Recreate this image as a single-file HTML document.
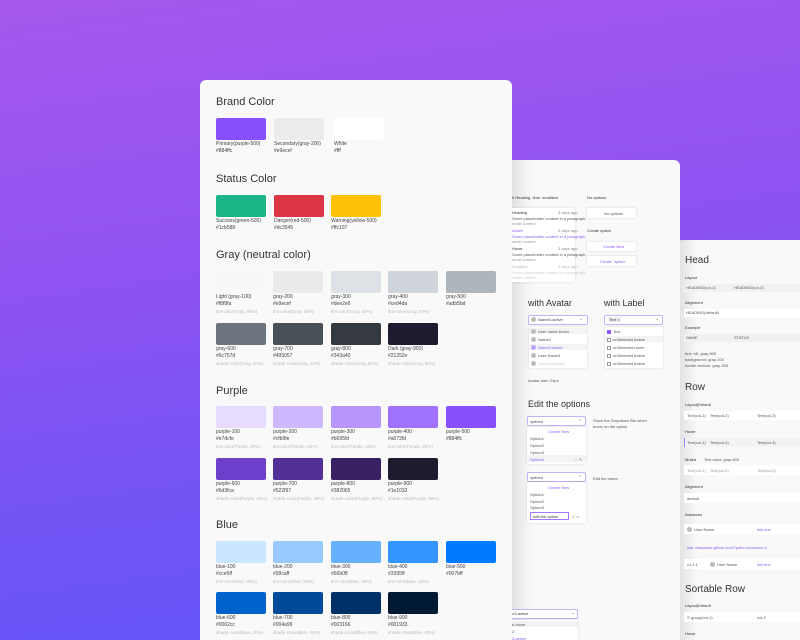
<!DOCTYPE html>
<html style="overflow:hidden;width:800px;height:640px"><head><meta charset="utf-8"><style>
*{margin:0;padding:0;box-sizing:border-box}
body{width:800px;height:640px;overflow:hidden;position:relative;font-family:"Liberation Sans",sans-serif;background:linear-gradient(172deg,#a558ec 0%,#9253f1 35%,#7354f5 70%,#5c55f8 100%)}
.a{position:absolute}
.card{position:absolute;background:#f9f9f9}
.h{position:absolute;font-size:11px;line-height:12px;color:#333;white-space:nowrap}
.h2{position:absolute;font-size:9px;line-height:10px;color:#333;white-space:nowrap}
.sw{position:absolute;width:50px}
.sw .c{height:22px;border-radius:2px}
.sw div.t{font-size:5px;line-height:7px;color:#444;white-space:nowrap;height:7px}
.sw div.m{font-size:4.5px;line-height:7px;color:#bbb;white-space:nowrap;height:7px}
.sw .c+div{margin-top:1px}
.s{position:absolute;font-size:4px;line-height:5px;color:#555;white-space:nowrap}
.p{color:#8b5cf6}
.box{position:absolute;background:#fff;box-shadow:0 0 2px rgba(0,0,0,.15);border-radius:1px}
.sel{position:absolute;background:#fff;border:1px solid #c8b0fb;border-radius:2px;height:10px}
.row{position:absolute;background:#fff;left:684px;width:116px}
.av{display:inline-block;width:5px;height:5px;border-radius:50%;background:#bbb;vertical-align:middle;margin-right:2px}
.cb{display:inline-block;width:4px;height:4px;border:0.5px solid #999;vertical-align:middle;margin-right:2px;background:#fff}
#clip{position:absolute;left:0;top:0;width:800px;height:640px;overflow:hidden}
</style></head><body><div id="clip">

<!-- card 3 -->
<div class="card" style="left:680px;top:240px;width:140px;height:400px;border-radius:6px 0 0 0"></div>
<div class="a" style="left:680px;top:240px;width:18px;height:400px;background:linear-gradient(90deg,#e3e3e3,rgba(249,249,249,0))"></div>
<!-- card 2 -->
<div class="card" style="left:440px;top:160px;width:240px;height:480px;border-radius:6px 6px 0 0"></div>
<div class="a" style="left:512px;top:160px;width:20px;height:480px;background:linear-gradient(90deg,#e2e2e2,rgba(249,249,249,0))"></div>

<!-- Card2 content -->
<div class="s" style="left:512px;top:195px;color:#333">h Heading, time, smalltext</div>
<div class="s" style="left:587px;top:195px;color:#333">No options</div>
<div class="box" style="left:505px;top:208px;width:70px;height:74px"></div>
<div class="s" style="left:512px;top:210px;color:#333">Heading</div><div class="s" style="left:558px;top:210px;color:#888">3 days ago</div>
<div class="s" style="left:512px;top:216px">Some placeholder content in a paragraph.</div><div class="s" style="left:512px;top:221px;color:#999">small content</div>
<div class="s p" style="left:512px;top:228px">Active</div><div class="s" style="left:558px;top:228px;color:#888">3 days ago</div>
<div class="s p" style="left:512px;top:234px">Some placeholder content in a paragraph.</div><div class="s" style="left:512px;top:239px;color:#999">small content</div>
<div class="s" style="left:512px;top:246px;color:#333">Hover</div><div class="s" style="left:558px;top:246px;color:#888">3 days ago</div>
<div class="s" style="left:512px;top:252px">Some placeholder content in a paragraph.</div><div class="s" style="left:512px;top:257px;color:#999">small content</div>
<div class="s" style="left:512px;top:264px;color:#bbb">Disabled</div><div class="s" style="left:558px;top:264px;color:#bbb">3 days ago</div>
<div class="s" style="left:512px;top:270px;color:#ccc">Some placeholder content in a paragraph.</div><div class="s" style="left:512px;top:275px;color:#ccc">small content</div>

<div class="box" style="left:587px;top:208px;width:49px;height:10px"></div>
<div class="s" style="left:604px;top:211px;color:#555">No options</div>
<div class="s" style="left:587px;top:228px;color:#333">Create option</div>
<div class="box" style="left:587px;top:242px;width:49px;height:9px"></div>
<div class="s p" style="left:603px;top:244px">Create New</div>
<div class="box" style="left:587px;top:256px;width:49px;height:10px"></div>
<div class="s p" style="left:600px;top:259px">Create 'option'</div>

<div class="h2" style="left:528px;top:298px">with Avatar</div>
<div class="h2" style="left:604px;top:298px">with Label</div>
<div class="sel" style="left:528px;top:315px;width:60px"></div>
<div class="s" style="left:531px;top:317px;color:#444"><span class="av"></span>Name3-active</div>
<div class="s" style="left:580px;top:317px;color:#444">^</div>
<div class="box" style="left:529px;top:327px;width:58px;height:41px"></div>
<div class="a" style="left:529px;top:328px;width:58px;height:6px;background:#f3f3f3"></div>
<div class="a" style="left:529px;top:344px;width:58px;height:6px;background:#f3f3f3"></div>
<div class="s" style="left:531px;top:329px"><span class="av"></span>User name-hover</div>
<div class="s" style="left:531px;top:337px"><span class="av"></span>Name2</div>
<div class="s p" style="left:531px;top:345px"><span class="av" style="background:#b9a3f5"></span>Name3-active</div>
<div class="s" style="left:531px;top:353px"><span class="av"></span>User Name4</div>
<div class="s" style="left:531px;top:361px;color:#ccc"><span class="av"></span>User5-disabled</div>

<div class="sel" style="left:604px;top:315px;width:59px"></div>
<div class="s" style="left:608px;top:317px;color:#444"><span style="background:#eee;padding:0 1px">Text ×</span></div>
<div class="s" style="left:656px;top:317px;color:#444">^</div>
<div class="box" style="left:605px;top:327px;width:58px;height:41px"></div>
<div class="a" style="left:605px;top:336px;width:58px;height:6px;background:#f3f3f3"></div>
<div class="s" style="left:607px;top:329px"><span class="cb" style="background:#8b5cf6;border-color:#8b5cf6"></span>Text</div>
<div class="s" style="left:607px;top:337px"><span class="cb"></span>unSelected Active</div>
<div class="s" style="left:607px;top:345px"><span class="cb"></span>unSelected-hover</div>
<div class="s" style="left:607px;top:353px"><span class="cb"></span>unSelected Active</div>
<div class="s" style="left:607px;top:361px"><span class="cb"></span>unSelected Active</div>
<div class="s" style="left:528px;top:378px">Avatar size: 24px</div>

<div class="h2" style="left:528px;top:399px">Edit the options</div>
<div class="sel" style="left:527px;top:416px;width:59px"></div>
<div class="s" style="left:530px;top:419px;color:#444">option4</div><div class="s" style="left:579px;top:418px">^</div>
<div class="box" style="left:527px;top:427px;width:59px;height:37px"></div>
<div class="s p" style="left:548px;top:429px">Create New</div>
<div class="s" style="left:530px;top:436px">Option1</div>
<div class="s" style="left:530px;top:443px">Option2</div>
<div class="s" style="left:530px;top:450px">Option3</div>
<div class="a" style="left:527px;top:455px;width:59px;height:7px;background:#f3f3f3"></div>
<div class="s p" style="left:530px;top:457px">Option4</div><div class="s" style="left:574px;top:457px">⋮ ↖</div>
<div class="s" style="left:593px;top:418px">Show the Dropdown Btn when</div>
<div class="s" style="left:593px;top:424px">hover on the option.</div>

<div class="sel" style="left:527px;top:472px;width:59px"></div>
<div class="s" style="left:530px;top:475px;color:#444">option4</div><div class="s" style="left:579px;top:474px">^</div>
<div class="box" style="left:527px;top:482px;width:59px;height:41px"></div>
<div class="s p" style="left:548px;top:485px">Create New</div>
<div class="s" style="left:530px;top:492px">Option1</div>
<div class="s" style="left:530px;top:499px">Option2</div>
<div class="s" style="left:530px;top:505px">Option3</div>
<div class="a" style="left:530px;top:512px;width:39px;height:8px;border:1px solid #a27cf8;background:#fff"></div>
<div class="s" style="left:533px;top:514px;color:#333">edit the option</div><div class="s" style="left:572px;top:514px">✓ ×</div>
<div class="s" style="left:593px;top:476px">Edit the name</div>

<div class="sel" style="left:505px;top:609px;width:73px"></div>
<div class="s" style="left:512px;top:611px;color:#444">n3-active</div><div class="s" style="left:572px;top:611px">^</div>
<div class="box" style="left:505px;top:620px;width:73px;height:30px"></div>
<div class="a" style="left:505px;top:621px;width:73px;height:6px;background:#f3f3f3"></div>
<div class="s" style="left:512px;top:622px">ri-hover</div>
<div class="s" style="left:512px;top:629px">2</div>
<div class="s p" style="left:512px;top:636px">3-active</div>

<!-- card 1 (on top of card 2 content) -->
<div class="card" style="left:200px;top:80px;width:312px;height:560px;border-radius:6px 6px 0 0"></div>

<!-- Card1 content -->
<div class="h" style="left:216px;top:96px">Brand Color</div>
<div class="sw" style="left:216px;top:118px"><div class="c" style="background:#884ffc"></div><div class="t">Primary(purple-500)</div><div class="t">#884ffc</div></div>
<div class="sw" style="left:274px;top:118px"><div class="c" style="background:#ececee"></div><div class="t">Secondary(gray-200)</div><div class="t">#e9ecef</div></div>
<div class="sw" style="left:334px;top:118px"><div class="c" style="background:#fff"></div><div class="t">White</div><div class="t">#fff</div></div>

<div class="h" style="left:216px;top:173px">Status Color</div>
<div class="sw" style="left:216px;top:195px"><div class="c" style="background:#1cb588"></div><div class="t">Success(green-500)</div><div class="t">#1cb588</div></div>
<div class="sw" style="left:274px;top:195px"><div class="c" style="background:#dc3545"></div><div class="t">Danger(red-500)</div><div class="t">#dc3545</div></div>
<div class="sw" style="left:331px;top:195px"><div class="c" style="background:#ffc107"></div><div class="t">Warning(yellow-500)</div><div class="t">#ffc107</div></div>

<div class="h" style="left:216px;top:249px">Gray (neutral color)</div>
<div class="sw" style="left:216px;top:271px"><div class="c" style="background:#f8f8f9"></div><div class="t">Light (gray-100)</div><div class="t">#f8f9fa</div><div class="m">tint-color(Gray, 80%)</div></div>
<div class="sw" style="left:273px;top:271px"><div class="c" style="background:#eaebed"></div><div class="t">gray-200</div><div class="t">#e9ecef</div><div class="m">tint-color(Gray, 60%)</div></div>
<div class="sw" style="left:331px;top:271px"><div class="c" style="background:#dee2e6"></div><div class="t">gray-300</div><div class="t">#dee2e6</div><div class="m">tint-color(Gray, 40%)</div></div>
<div class="sw" style="left:388px;top:271px"><div class="c" style="background:#ced4da"></div><div class="t">gray-400</div><div class="t">#ced4da</div><div class="m">tint-color(Gray, 20%)</div></div>
<div class="sw" style="left:446px;top:271px"><div class="c" style="background:#adb5bd"></div><div class="t">gray-500</div><div class="t">#adb5bd</div></div>
<div class="sw" style="left:216px;top:323px"><div class="c" style="background:#6c757d"></div><div class="t">gray-600</div><div class="t">#6c757d</div><div class="m">shade-color(Gray, 20%)</div></div>
<div class="sw" style="left:273px;top:323px"><div class="c" style="background:#495057"></div><div class="t">gray-700</div><div class="t">#495057</div><div class="m">shade-color(Gray, 40%)</div></div>
<div class="sw" style="left:331px;top:323px"><div class="c" style="background:#343a40"></div><div class="t">gray-800</div><div class="t">#343a40</div><div class="m">shade-color(Gray, 60%)</div></div>
<div class="sw" style="left:388px;top:323px"><div class="c" style="background:#1e1b2e"></div><div class="t">Dark (gray-900)</div><div class="t">#21252e</div><div class="m">shade-color(Gray, 80%)</div></div>

<div class="h" style="left:216px;top:385px">Purple</div>
<div class="sw" style="left:216px;top:406px"><div class="c" style="background:#e7dcfe"></div><div class="t">purple-100</div><div class="t">#e7dcfe</div><div class="m">tint-color(Purple, 80%)</div></div>
<div class="sw" style="left:273px;top:406px"><div class="c" style="background:#cfb9fe"></div><div class="t">purple-200</div><div class="t">#cfb9fe</div><div class="m">tint-color(Purple, 60%)</div></div>
<div class="sw" style="left:331px;top:406px"><div class="c" style="background:#b695fd"></div><div class="t">purple-300</div><div class="t">#b695fd</div><div class="m">tint-color(Purple, 40%)</div></div>
<div class="sw" style="left:388px;top:406px"><div class="c" style="background:#a072fd"></div><div class="t">purple-400</div><div class="t">#a072fd</div><div class="m">tint-color(Purple, 20%)</div></div>
<div class="sw" style="left:446px;top:406px"><div class="c" style="background:#884ffc"></div><div class="t">purple-500</div><div class="t">#884ffc</div></div>
<div class="sw" style="left:216px;top:458px"><div class="c" style="background:#6d3fca"></div><div class="t">purple-600</div><div class="t">#6d3fca</div><div class="m">shade-color(Purple, 20%)</div></div>
<div class="sw" style="left:273px;top:458px"><div class="c" style="background:#522f97"></div><div class="t">purple-700</div><div class="t">#522f97</div><div class="m">shade-color(Purple, 40%)</div></div>
<div class="sw" style="left:331px;top:458px"><div class="c" style="background:#382065"></div><div class="t">purple-800</div><div class="t">#382065</div><div class="m">shade-color(Purple, 60%)</div></div>
<div class="sw" style="left:388px;top:458px"><div class="c" style="background:#1e1b2e"></div><div class="t">purple-900</div><div class="t">#1e1032</div><div class="m">shade-color(Purple, 80%)</div></div>

<div class="h" style="left:216px;top:519px">Blue</div>
<div class="sw" style="left:216px;top:541px"><div class="c" style="background:#cce5ff"></div><div class="t">blue-100</div><div class="t">#cce5ff</div><div class="m">tint-color(Blue, 80%)</div></div>
<div class="sw" style="left:273px;top:541px"><div class="c" style="background:#99caff"></div><div class="t">blue-200</div><div class="t">#99caff</div><div class="m">tint-color(Blue, 60%)</div></div>
<div class="sw" style="left:331px;top:541px"><div class="c" style="background:#66b0ff"></div><div class="t">blue-300</div><div class="t">#66b0ff</div><div class="m">tint-color(Blue, 40%)</div></div>
<div class="sw" style="left:388px;top:541px"><div class="c" style="background:#3395ff"></div><div class="t">blue-400</div><div class="t">#3395ff</div><div class="m">tint-color(Blue, 20%)</div></div>
<div class="sw" style="left:446px;top:541px"><div class="c" style="background:#007bff"></div><div class="t">blue-500</div><div class="t">#007bff</div></div>
<div class="sw" style="left:216px;top:592px"><div class="c" style="background:#0062cc"></div><div class="t">blue-600</div><div class="t">#0062cc</div><div class="m">shade-color(Blue, 20%)</div></div>
<div class="sw" style="left:273px;top:592px"><div class="c" style="background:#004a99"></div><div class="t">blue-700</div><div class="t">#004a99</div><div class="m">shade-color(Blue, 40%)</div></div>
<div class="sw" style="left:331px;top:592px"><div class="c" style="background:#003166"></div><div class="t">blue-800</div><div class="t">#003166</div><div class="m">shade-color(Blue, 60%)</div></div>
<div class="sw" style="left:388px;top:592px"><div class="c" style="background:#001933"></div><div class="t">blue-900</div><div class="t">#001933</div><div class="m">shade-color(Blue, 80%)</div></div>

<!-- Card3 content -->
<div class="h" style="left:685px;top:255px;font-size:10px">Head</div>
<div class="s" style="left:685px;top:275px;color:#333">Layout</div>
<div class="row" style="top:284px;height:8px;background:#f1f1f1"></div>
<div class="s" style="left:686px;top:285px">HEADING(col-1)</div><div class="s" style="left:734px;top:285px">HEADING(col-2)</div>
<div class="s" style="left:685px;top:300px;color:#333">Alignment</div>
<div class="row" style="top:309px;height:8px"></div>
<div class="s" style="left:686px;top:310px">HEADING(default)</div>
<div class="s" style="left:685px;top:325px;color:#333">Example</div>
<div class="row" style="top:334px;height:8px;background:#f1f1f1"></div>
<div class="s" style="left:686px;top:335px">NAME</div><div class="s" style="left:734px;top:335px">STATUS</div>
<div class="s" style="left:685px;top:351px">text: h5, gray-900</div>
<div class="s" style="left:685px;top:357px">background: gray-100</div>
<div class="s" style="left:685px;top:363px">border-bottom: gray-300</div>

<div class="h" style="left:685px;top:382px;font-size:10px">Row</div>
<div class="s" style="left:685px;top:402px;color:#333">Layout|Default</div>
<div class="row" style="top:411px;height:9px"></div>
<div class="s" style="left:687px;top:413px">Text(col-1)</div><div class="s" style="left:710px;top:413px">Text(col-2)</div><div class="s" style="left:757px;top:413px">Text(col-3)</div>
<div class="s" style="left:685px;top:429px;color:#333">Hover</div>
<div class="row" style="top:438px;height:9px;border-left:1px solid #a27cf8;background:#f3f3f3"></div>
<div class="s" style="left:687px;top:440px">Text(col-1)</div><div class="s" style="left:710px;top:440px">Text(col-2)</div><div class="s" style="left:757px;top:440px">Text(col-3)</div>
<div class="s" style="left:685px;top:457px;color:#333">Muted</div><div class="s" style="left:704px;top:457px">Text color: gray-600</div>
<div class="row" style="top:465px;height:10px"></div>
<div class="s" style="left:687px;top:468px;color:#999">Text(col-1)</div><div class="s" style="left:710px;top:468px;color:#999">Text(col-2)</div><div class="s" style="left:757px;top:468px;color:#999">Text(col-3)</div>
<div class="s" style="left:685px;top:484px;color:#333">Alignment</div>
<div class="row" style="top:493px;height:10px"></div>
<div class="s" style="left:687px;top:496px">default</div>
<div class="s" style="left:685px;top:512px;color:#333">Instances</div>
<div class="row" style="top:524px;height:10px"></div>
<div class="s" style="left:687px;top:527px"><span class="av"></span>User Name</div><div class="s p" style="left:757px;top:527px">link text</div>
<div class="s p" style="left:687px;top:545px">link: easytools.github.io/ui/?path=/docs/row-5</div>
<div class="row" style="top:559px;height:10px"></div>
<div class="s" style="left:687px;top:562px">v1.1.1</div><div class="s" style="left:710px;top:562px"><span class="av"></span>User Name</div><div class="s p" style="left:757px;top:562px">link text</div>

<div class="h" style="left:685px;top:584px;font-size:10px">Sortable Row</div>
<div class="s" style="left:685px;top:603px;color:#333">Layout|Default</div>
<div class="row" style="top:612px;height:10px"></div>
<div class="s" style="left:687px;top:615px">⠿ group(col-1)</div><div class="s" style="left:757px;top:615px">col-2</div>
<div class="s" style="left:685px;top:631px;color:#333">Hover</div>
</div></body></html>
